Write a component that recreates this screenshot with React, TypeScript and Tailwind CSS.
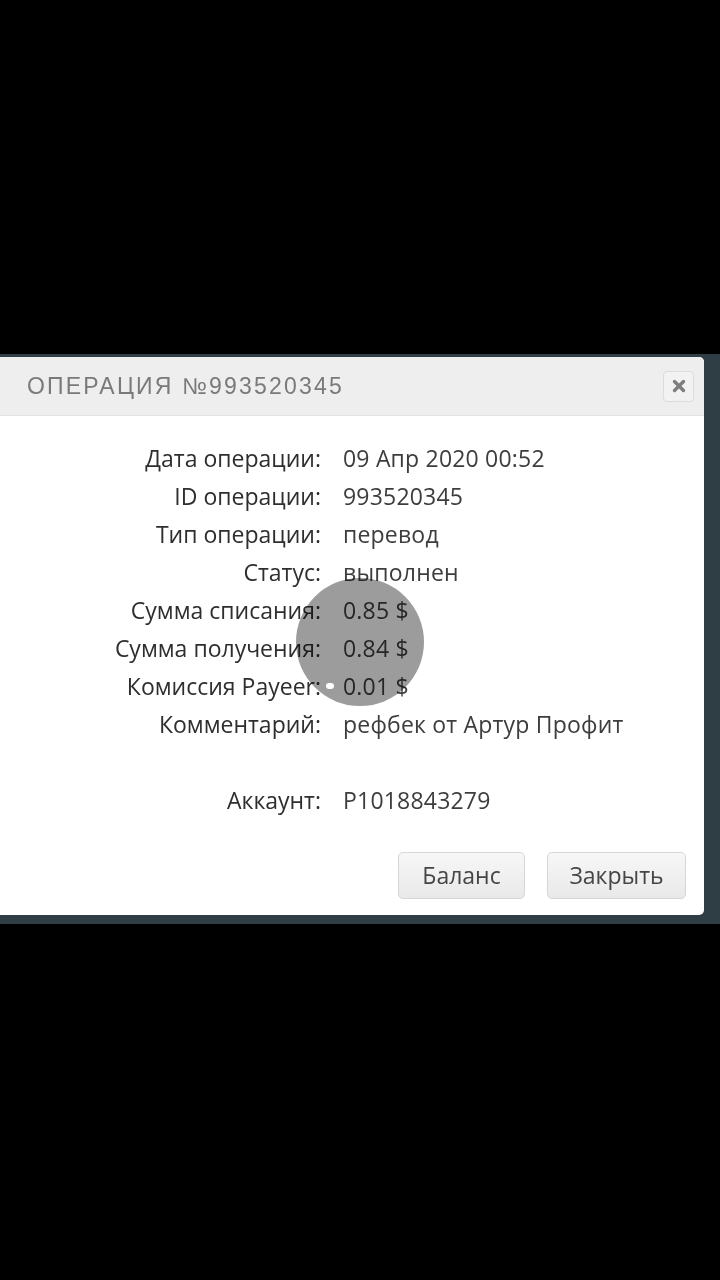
import React from 'react'

const ROWS: Array<[string, string]> = [
  ['Дата операции:', '09 Апр 2020 00:52'],
  ['ID операции:', '993520345'],
  ['Тип операции:', 'перевод'],
  ['Статус:', 'выполнен'],
  ['Сумма списания:', '0.85 $'],
  ['Сумма получения:', '0.84 $'],
  ['Комиссия Payeer:', '0.01 $'],
  ['Комментарий:', 'рефбек от Артур Профит'],
]

function Row({ label, value }: { label: string; value: string }) {
  return (
    <div className="flex h-[38px] items-center">
      <div className="w-[321px] shrink-0 text-right text-[#2e2e2e]">{label}</div>
      <div className="pl-[22px] text-[#3d3d3d] tracking-[0.2px]">{value}</div>
    </div>
  )
}

export default function App() {
  return (
    <div className="min-h-[1280px] w-[720px] bg-black flex flex-col">
      <div className="h-[354px]" />
      <div className="relative h-[570px] bg-[#2f3e45] pt-[3px]">
        <div className="w-[704px] h-[558px] rounded-r-[5px] bg-white overflow-hidden flex flex-col">
          {/* header */}
          <div className="h-[59px] bg-[#eeeeee] flex items-center justify-between pl-[27px] pr-[10px] border-b border-[#e2e2e2]">
            <h1
              className="text-[23px] text-[#7a7a7a] tracking-[2.2px]"
              style={{ fontFamily: '"Liberation Sans", "DejaVu Sans", sans-serif' }}
            >
              ОПЕРАЦИЯ №993520345
            </h1>
            <button className="w-[31px] h-[31px] rounded-[4px] border border-[#dcdcdc] bg-[#f2f2f2] flex items-center justify-center">
              <svg width="14" height="14" viewBox="0 0 14 14">
                <path d="M2.5 2.5 L11.5 11.5 M11.5 2.5 L2.5 11.5" stroke="#7d7d7d" strokeWidth="3.4" strokeLinecap="round" />
              </svg>
            </button>
          </div>

          {/* body */}
          <div
            className="pt-[23px] text-[23px]"
            style={{ fontFamily: '"Open Sans", Lato, sans-serif' }}
          >
            {ROWS.map(([l, v]) => (
              <Row key={l} label={l} value={v} />
            ))}
            <div className="h-[38px]" />
            <Row label="Аккаунт:" value="P1018843279" />
          </div>

          {/* footer */}
          <div className="flex justify-end gap-[22px] pr-[18px] mt-[33px]">
            <button
              className="w-[127px] h-[47px] rounded-[5px] border border-[#d6d6d6] bg-gradient-to-b from-[#f7f7f7] to-[#e9e9e9] text-[23px] text-[#454545]"
              style={{ fontFamily: '"Open Sans", "DejaVu Sans", sans-serif' }}
            >
              Баланс
            </button>
            <button
              className="w-[139px] h-[47px] rounded-[5px] border border-[#d6d6d6] bg-gradient-to-b from-[#f7f7f7] to-[#e9e9e9] text-[23px] text-[#454545]"
              style={{ fontFamily: '"Open Sans", "DejaVu Sans", sans-serif' }}
            >
              Закрыть
            </button>
          </div>
        </div>

        {/* touch indicator */}
        <div className="absolute left-[296px] top-[224px] w-[128px] h-[128px] rounded-full bg-[#9c9c9c] mix-blend-multiply" />
        <div className="absolute left-[326px] top-[329px] w-[8px] h-[6px] rounded-full bg-white" />
      </div>
      <div className="flex-1" />
    </div>
  )
}
